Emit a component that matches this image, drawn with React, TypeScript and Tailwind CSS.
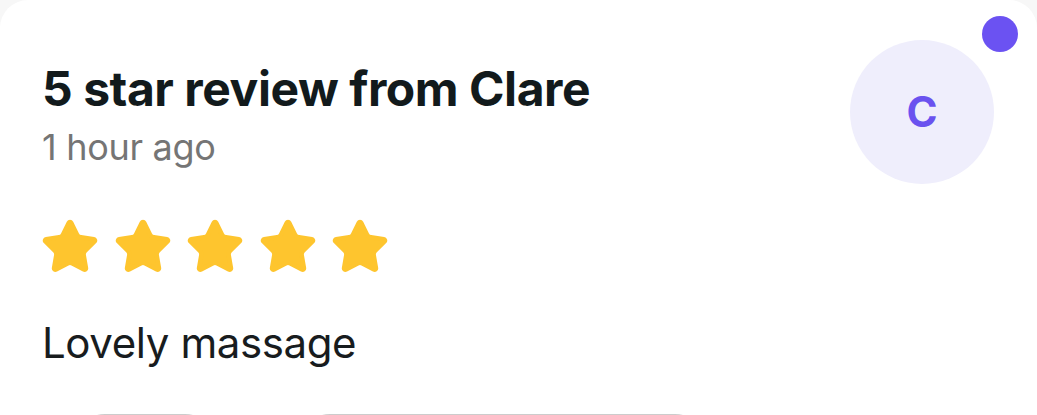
import { Star } from "lucide-react";

export default function App() {
    return (
        <div className="h-[415px] w-[1037px] overflow-hidden bg-[#f7f7f7] font-['Inter',sans-serif]">
            <div className="h-[440px] rounded-t-[28px] bg-white pl-[42px] pr-[43px] pt-[40px]">
                <div className="flex items-start justify-between">
                    <div className="pt-[20px]">
                        <h1 className="text-[48px] font-bold leading-[58px] tracking-[-0.45px] text-[#121a1c]">
                            5 star review from Clare
                        </h1>
                        <p className="mt-[7px] text-[36px] leading-[44px] tracking-[-0.3px] text-[#757575]">
                            1 hour ago
                        </p>
                    </div>
                    <div className="relative h-[144px] w-[144px]">
                        <div className="flex h-full w-full items-center justify-center rounded-full bg-[#efeefc]">
                            <span className="text-[42px] font-bold leading-none text-[#6a52ef]">C</span>
                        </div>
                        <span className="absolute left-[132px] top-[-24px] h-[36px] w-[36px] rounded-full bg-[#6b52f2]" />
                    </div>
                </div>
                <div className="mt-[33px] flex gap-[14.5px]">
                    {[0, 1, 2, 3, 4].map((i) => (
                        <Star
                            key={i}
                            className="-ml-[2px] h-[60px] w-[60px] text-[#fec52e]"
                            fill="#fec52e"
                            strokeWidth={1.8}
                        />
                    ))}
                </div>
                <p className="mt-[40px] text-[42px] leading-[52px] tracking-[-0.4px] text-[#181c1e]">
                    Lovely massage
                </p>
                <div className="ml-[33px] mt-[45px] flex gap-[85px]">
                    <div className="h-[60px] w-[140px] rounded-full border-[3px] border-[#cccccc]" />
                    <div className="h-[60px] w-[405px] rounded-full border-[3px] border-[#cccccc]" />
                </div>
            </div>
        </div>
    );
}
